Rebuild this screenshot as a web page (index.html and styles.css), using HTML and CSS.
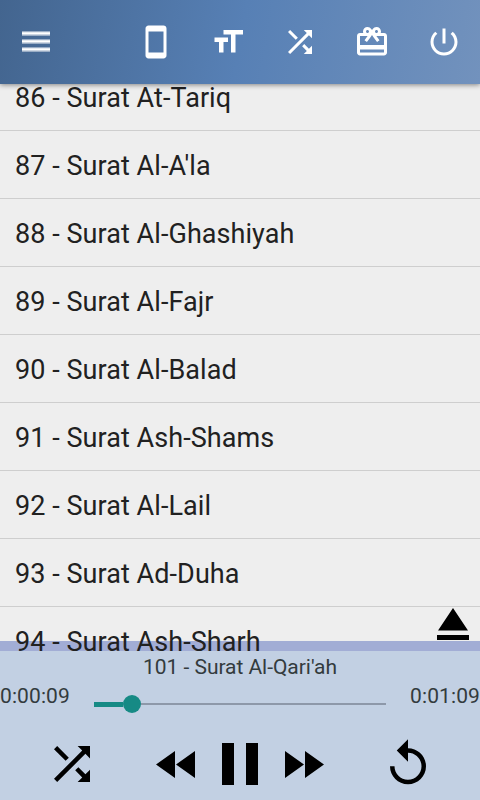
FILE: index.html
```html
<!DOCTYPE html>
<html lang="en">
  <head>
    <meta charset="UTF-8" />
    <meta name="viewport" content="width=device-width, initial-scale=1.0" />
    <title>Surat Player</title>
    <link rel="stylesheet" href="styles.css">
  </head>
  <body>
    <header class="toolbar">
      <button class="menu-button" aria-label="Menu">
        <svg width="28" height="22" viewBox="0 0 28 22">
          <path d="M0 0h28v5H0zM0 8h28v5H0zM0 16h28v5H0z" fill-opacity=".45"/>
          <path d="M0 1.2h28v2.4H0zM0 9.2h28v2.4H0zM0 17.2h28v2.4H0z"/>
        </svg>
      </button>
      <nav class="actions">
        <svg class="icon" viewBox="0 0 24 24"><path d="M17 1.01L7 1c-1.1 0-1.99.9-1.99 2v18c0 1.1.89 2 1.99 2h10c1.1 0 2-.9 2-2V3c0-1.1-.9-1.99-2-1.99zM17 19H7V5h10v14z"/></svg>
        <svg class="icon" viewBox="0 0 24 24"><path d="M9 4v3h5v12h3V7h5V4H9zm-6 8h3v7h3v-7h3V9H3v3z"/></svg>
        <svg class="icon" viewBox="0 0 24 24"><path d="M10.59 9.17L5.41 4 4 5.41l5.17 5.17 1.42-1.41zM14.5 4l2.04 2.04L4 18.59 5.41 20 17.96 7.46 20 9.5V4h-5.5zm.33 9.41l-1.41 1.41 3.13 3.13L14.5 20H20v-5.5l-2.04 2.04-3.13-3.13z"/></svg>
        <svg class="icon" viewBox="0 0 24 24"><path d="M20 6h-2.18c.11-.31.18-.65.18-1 0-1.66-1.34-3-3-3-1.05 0-1.96.54-2.5 1.35l-.5.67-.5-.68C10.96 2.54 10.05 2 9 2 7.34 2 6 3.34 6 5c0 .35.07.69.18 1H4c-1.11 0-1.99.89-1.99 2L2 19c0 1.11.89 2 2 2h16c1.11 0 2-.89 2-2V8c0-1.11-.89-2-2-2zm-5-2c.55 0 1 .45 1 1s-.45 1-1 1-1-.45-1-1 .45-1 1-1zM9 4c.55 0 1 .45 1 1s-.45 1-1 1-1-.45-1-1 .45-1 1-1zm11 15H4v-2h16v2zm0-5H4V8h5.08L7 10.83 8.62 12 11 8.76l1-1.36 1 1.36L15.38 12 17 10.83 14.92 8H20v6z"/></svg>
        <svg class="icon" viewBox="0 0 24 24"><path d="M13 3h-2v10h2V3zm4.83 2.17l-1.42 1.42C17.99 7.86 19 9.81 19 12c0 3.87-3.13 7-7 7s-7-3.13-7-7c0-2.19 1.01-4.14 2.58-5.42L6.17 5.17C4.23 6.82 3 9.26 3 12c0 4.97 4.03 9 9 9s9-4.03 9-9c0-2.74-1.23-5.18-3.17-6.83z"/></svg>
      </nav>
    </header>

    <main class="list-area">
      <ul class="surat-list">
        <li>86 - Surat At-Tariq</li>
        <li>87 - Surat Al-A'la</li>
        <li>88 - Surat Al-Ghashiyah</li>
        <li>89 - Surat Al-Fajr</li>
        <li>90 - Surat Al-Balad</li>
        <li>91 - Surat Ash-Shams</li>
        <li>92 - Surat Al-Lail</li>
        <li>93 - Surat Ad-Duha</li>
        <li>94 - Surat Ash-Sharh</li>
      </ul>
      <svg class="eject" width="32" height="32" viewBox="0 0 32 32"><path d="M16 0l15 22.5H1zM0 27h32v5H0z"/></svg>
    </main>

    <footer class="player">
      <div class="track-title">101 - Surat Al-Qari'ah</div>
      <div class="progress">
        <span class="time">0:00:09</span>
        <div class="slider">
          <div class="played"></div>
          <div class="thumb"></div>
          <div class="remaining"></div>
        </div>
        <span class="time">0:01:09</span>
      </div>
      <div class="controls">
        <svg width="54" height="54" viewBox="0 0 24 24"><path d="M10.59 9.17L5.41 4 4 5.41l5.17 5.17 1.42-1.41zM14.5 4l2.04 2.04L4 18.59 5.41 20 17.96 7.46 20 9.5V4h-5.5zm.33 9.41l-1.41 1.41 3.13 3.13L14.5 20H20v-5.5l-2.04 2.04-3.13-3.13z"/></svg>
        <div class="transport">
          <svg width="39" height="27" viewBox="0 0 39 27"><path d="M19 0v27L0 13.5zM39 0v27L20 13.5z"/></svg>
          <svg width="36" height="42" viewBox="0 0 36 42"><path d="M0 0h12v42H0zM24 0h12v42H24z"/></svg>
          <svg width="39" height="27" viewBox="0 0 39 27"><path d="M0 0v27l19-13.5zM20 0v27l19-13.5z"/></svg>
        </div>
        <svg width="54" height="54" viewBox="0 0 24 24"><path d="M12 5V1L7 6l5 5V7c3.31 0 6 2.69 6 6s-2.69 6-6 6-6-2.69-6-6H4c0 4.42 3.58 8 8 8s8-3.58 8-8-3.58-8-8-8z"/></svg>
      </div>
    </footer>
  </body>
</html>
```
FILE: styles.css
```css
* {
  box-sizing: border-box;
}

body {
  display: flex;
  flex-direction: column;
  height: 100vh;
  margin: 0;
  overflow: hidden;
  font-family: Roboto, sans-serif;
  color: #212121;
  background-color: #eee;
}

svg {
  display: block;
  flex: none;
}

.toolbar {
  position: relative;
  z-index: 1;
  display: flex;
  flex: none;
  align-items: center;
  justify-content: space-between;
  height: 84px;
  padding: 0 18px 0 22px;
  background: linear-gradient(100deg, #43658f, #5780b5 50%, #7292bd);
  box-shadow: 0 1px 5px rgba(0, 0, 0, 0.45);
  fill: #fff;
}

.menu-button {
  padding: 0;
  border: none;
  background: none;
  fill: #fff;
}

.actions {
  display: flex;
  gap: 36px;
}

.icon {
  width: 36px;
  height: 36px;
}

.list-area {
  position: relative;
  flex: none;
  height: 567px;
  overflow: hidden;
  background: linear-gradient(#eee 557px, #a2add5 557px);
}

/* scrolled part way through the first row */
.surat-list {
  margin: -21px 0 0;
  padding: 0;
  list-style: none;
}

.surat-list li {
  height: 68px;
  padding-left: 15px;
  border-bottom: 1px solid #cecece;
  font-size: 27px;
  line-height: 71px;
  letter-spacing: 0.06px;
  white-space: nowrap;
}

.eject {
  position: absolute;
  right: 11px;
  bottom: 11px;
}

.player {
  flex: 1;
  background-color: #c2d0e3;
}

.track-title {
  height: 31px;
  font-size: 21px;
  line-height: 33px;
  letter-spacing: -0.04px;
  text-align: center;
  color: #333b3d;
}

.progress {
  display: flex;
  justify-content: space-between;
  height: 44px;
}

.time {
  font-size: 21px;
  line-height: 29px;
  letter-spacing: 0.1px;
  color: #333b3d;
}

.slider {
  display: flex;
  align-items: center;
  width: 292px;
  height: 44px;
}

.played {
  width: 29px;
  height: 5px;
  background-color: #168a85;
}

.thumb {
  width: 18px;
  height: 18px;
  border-radius: 50%;
  background-color: #168a85;
}

.remaining {
  flex: 1;
  height: 2px;
  background-color: #8d98a9;
}

.controls {
  display: flex;
  align-items: center;
  justify-content: space-between;
  padding: 11px 45px 0;
}

.transport {
  display: flex;
  align-items: center;
  gap: 27px;
}
```
